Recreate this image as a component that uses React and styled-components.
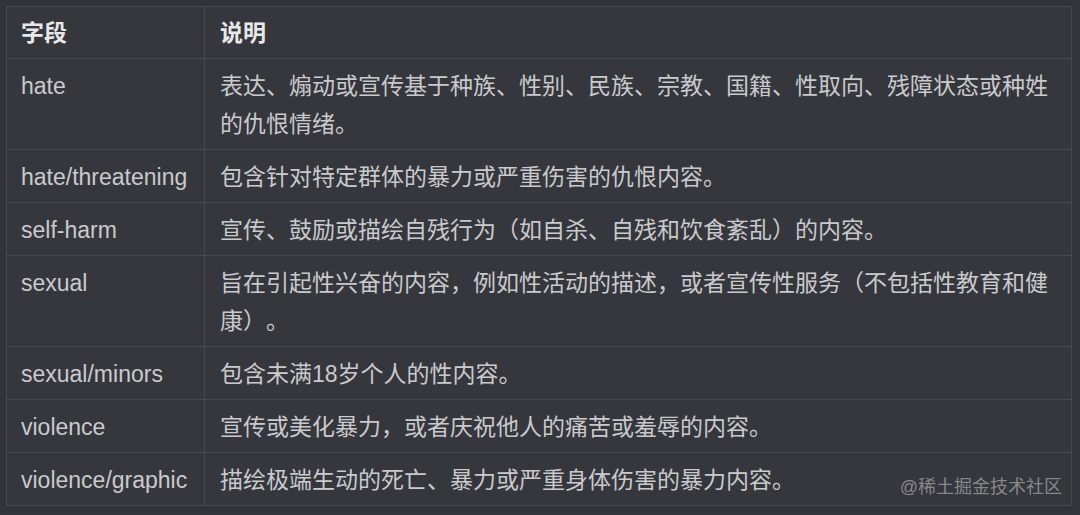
import React from 'react'
import styled, { createGlobalStyle } from 'styled-components'

const Global = createGlobalStyle`
  html, body {
    margin: 0;
    padding: 0;
    background: #323439;
  }
  body {
    width: 1080px;
    height: 515px;
    overflow: hidden;
    font-family: "Liberation Sans", "Noto Sans CJK SC", sans-serif;
    text-spacing-trim: space-all;
  }
`

const rows = [
  ['hate', '表达、煽动或宣传基于种族、性别、民族、宗教、国籍、性取向、残障状态或种姓的仇恨情绪。'],
  ['hate/threatening', '包含针对特定群体的暴力或严重伤害的仇恨内容。'],
  ['self-harm', '宣传、鼓励或描绘自残行为（如自杀、自残和饮食紊乱）的内容。'],
  ['sexual', '旨在引起性兴奋的内容，例如性活动的描述，或者宣传性服务（不包括性教育和健康）。'],
  ['sexual/minors', '包含未满18岁个人的性内容。'],
  ['violence', '宣传或美化暴力，或者庆祝他人的痛苦或羞辱的内容。'],
  ['violence/graphic', '描绘极端生动的死亡、暴力或严重身体伤害的暴力内容。'],
]

const Page = styled.div`
  position: relative;
  width: 1080px;
  height: 515px;
  padding: 6px 0 0 6px;
  box-sizing: border-box;
`

const Table = styled.table`
  width: 1066px;
  border-collapse: collapse;
  table-layout: fixed;
  background: #35373c;
  border: 1px solid #46484d;
`

const Cell = styled.td`
  border: 1px solid #46484d;
  padding: 8px 14px 6px ${(p) => (p.$first ? '14px' : '15px')};
  width: ${(p) => (p.$first ? '169px' : 'auto')};
  font-size: 23px;
  line-height: 38px;
  color: #c9cacd;
  vertical-align: top;
  text-align: left;
`

const Head = styled(Cell).attrs({ as: 'th' })`
  font-weight: bold;
  color: #e8e8ea;
  padding-top: 7px;
  padding-bottom: 6px;
`

const Watermark = styled.div`
  position: absolute;
  right: 18px;
  bottom: 17px;
  font-size: 18px;
  line-height: 22px;
  color: rgba(205, 206, 210, 0.55);
`

export default function App() {
  return (
    <Page>
      <Global />
      <Table>
        <thead>
          <tr>
            <Head $first>字段</Head>
            <Head>说明</Head>
          </tr>
        </thead>
        <tbody>
          {rows.map(([field, desc]) => (
            <tr key={field}>
              <Cell $first>{field}</Cell>
              <Cell>{desc}</Cell>
            </tr>
          ))}
        </tbody>
      </Table>
      <Watermark>@稀土掘金技术社区</Watermark>
    </Page>
  )
}
